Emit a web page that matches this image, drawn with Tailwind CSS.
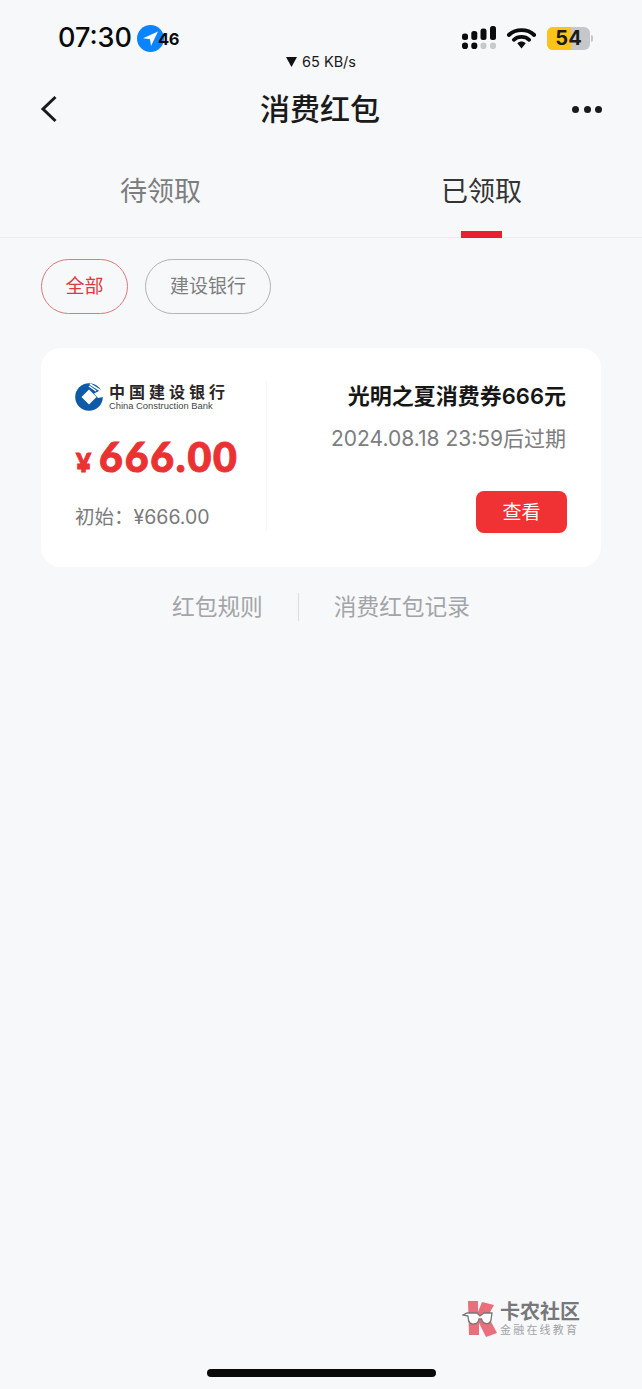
<!DOCTYPE html>
<html lang="zh-CN">
<head>
<meta charset="utf-8">
<script src="https://cdn.jsdelivr.net/npm/@tailwindcss/browser@4"></script>
</head>
<body class="m-0 bg-[#f7f8fa]">
<div class="relative w-[642px] h-[1389px] overflow-hidden bg-[#f7f8fa] font-['Inter','Noto_Sans_CJK_SC',sans-serif]">

  <!-- status bar -->
  <div class="h-[50px] pt-[20px] pl-[58px] pr-[49px] flex items-start justify-between">
    <div class="flex items-center h-[36px]">
      <span class="text-[27px] leading-[36px] font-medium text-[#0b0b0b]">07:30</span>
      <div class="relative ml-[5px] w-[27px] h-[27px] rounded-full bg-[#0a84ff] flex items-center justify-center">
        <svg width="17" height="17" viewBox="0 0 17 17"><path d="M16 1.500 L1 8.200 L8 9.200 L9 16 Z" fill="#fff"/></svg>
        <span class="absolute left-[21px] top-[2px] text-[16.500px] leading-[24px] font-bold text-[#0b0b0b] tracking-[-0.5px]">46</span>
      </div>
    </div>
    <div class="flex items-center h-[36px] gap-[11px]">
      <svg width="34" height="24" viewBox="0 0 34 24">
        <rect x="0" y="7.500" width="6" height="6.500" rx="2.500" fill="#0b0b0b"/>
        <rect x="9.300" y="5" width="6" height="9" rx="2.500" fill="#0b0b0b"/>
        <rect x="18.500" y="2.500" width="6" height="11.500" rx="2.500" fill="#0b0b0b"/>
        <rect x="28" y="0" width="6" height="14" rx="2.500" fill="#0b0b0b"/>
        <rect x="0" y="16.500" width="6" height="6.500" rx="2.800" fill="#0b0b0b"/>
        <rect x="9.300" y="16.500" width="6" height="6.500" rx="2.800" fill="#0b0b0b"/>
        <rect x="18.500" y="16.500" width="6" height="6.500" rx="2.800" fill="#c8c9cc"/>
        <rect x="28" y="16.500" width="6" height="6.500" rx="2.800" fill="#c8c9cc"/>
      </svg>
      <svg width="29" height="22" viewBox="0 0 29 22">
        <path d="M1.800 8 C8.500 1.500 20.500 1.500 27.200 8" fill="none" stroke="#0b0b0b" stroke-width="3.900" stroke-linecap="round"/>
        <path d="M6.800 12.800 C10.800 9 18.200 9 22.200 12.800" fill="none" stroke="#0b0b0b" stroke-width="3.700" stroke-linecap="round"/>
        <path d="M10.300 16.200 C12.800 13.800 16.200 13.800 18.700 16.200 L14.500 21.500 Z" fill="#0b0b0b"/>
      </svg>
      <div class="flex items-center">
        <div class="relative w-[43px] h-[23px] rounded-[6px] overflow-hidden bg-[#c6c7ca] flex items-center justify-center">
          <div class="absolute left-0 top-0 bottom-0 w-[24px] bg-[#fcc419]"></div>
          <span class="relative text-[20px] leading-[23px] font-bold text-[#1a1a1a]">54</span>
        </div>
        <div class="ml-[1px] w-[2px] h-[7px] rounded-r-full bg-[#c6c7ca]"></div>
      </div>
    </div>
  </div>

  <!-- network speed -->
  <div class="h-[24px] flex items-center justify-center gap-[5px] text-[14.500px] leading-[24px] text-[#1a1a1a]">
    <svg width="11" height="10" viewBox="0 0 11 10"><path d="M0 0 H11 L5.500 10 Z" fill="#111"/></svg>
    <span>65 KB/s</span>
  </div>

  <!-- nav -->
  <div class="h-[70px] px-[40px] flex items-center justify-between">
    <svg width="18" height="28" viewBox="0 0 18 28"><path d="M15.500 2 L3 14 L15.500 26" fill="none" stroke="#1a1a1a" stroke-width="3"/></svg>
    <h1 class="text-[30px] leading-[40px] font-medium text-[#1a1a1a] ml-[10px]">消费红包</h1>
    <div class="flex items-center gap-[4.500px]">
      <span class="w-[7px] h-[7px] rounded-full bg-[#1a1a1a]"></span>
      <span class="w-[7px] h-[7px] rounded-full bg-[#1a1a1a]"></span>
      <span class="w-[7px] h-[7px] rounded-full bg-[#1a1a1a]"></span>
    </div>
  </div>

  <!-- tabs -->
  <div class="h-[94px] grid grid-cols-2 border-b border-[#ececee]">
    <div class="flex justify-center pt-[28px] text-[27px] leading-[40px] text-[#7d7d7f]">待领取</div>
    <div class="relative flex justify-center pt-[28px] text-[27px] leading-[40px] text-[#333333]">
      已领取
      <span class="absolute bottom-[-1px] left-[140px] w-[41px] h-[7px] bg-[#e8202e]"></span>
    </div>
  </div>

  <!-- filters -->
  <div class="flex gap-[17px] pl-[41px] pt-[21px]">
    <div class="w-[87px] h-[55px] pt-[2px] rounded-full border border-[#e0777a] flex items-center justify-center text-[19px] text-[#e0383c]">全部</div>
    <div class="w-[126px] h-[55px] pt-[2px] rounded-full border border-[#b3b3b5] flex items-center justify-center text-[19px] text-[#7f7f81]">建设银行</div>
  </div>

  <!-- card -->
  <div class="mx-[41px] mt-[34px] h-[219px] rounded-[20px] bg-white flex pt-[33px]">
    <div class="w-[226px] h-[150px] pl-[34px] border-r border-[#f5f5f6] shrink-0">
      <div class="flex items-center h-[32px]">
        <svg width="28" height="28" viewBox="0 0 28 28" class="shrink-0">
          <circle cx="14" cy="14" r="13.800" fill="#0d5aa7"/>
          <path d="M14 6.500 L21.500 14 L14 21.500 L6.500 14 Z" fill="#fff"/>
          <path d="M15 1 L27.500 9" fill="none" stroke="#fff" stroke-width="1.800"/>
          <path d="M19 10.500 L28 6 L28 14 L23 15 Z" fill="#fff"/>
          <path d="M14 3 L21 8" fill="none" stroke="#fff" stroke-width="1.500"/>
        </svg>
        <div class="ml-[6px] flex flex-col">
          <span class="text-[16px] leading-[17px] font-semibold tracking-[4px] text-[#2a2526] whitespace-nowrap">中国建设银行</span>
          <span class="text-[9.400px] leading-[10px] text-[#444] font-['Liberation_Sans',sans-serif] whitespace-nowrap">China Construction Bank</span>
        </div>
      </div>
      <div class="mt-[20px] flex items-baseline text-[#ea3233] font-['Lato',sans-serif] font-black [-webkit-text-stroke:1px_#ea3233]">
        <span class="ml-[1px] text-[26px] leading-[48px] mr-[8px]">¥</span>
        <span class="text-[41px] leading-[48px] tracking-[1.800px]">666.00</span>
      </div>
      <div class="mt-[16px] text-[19.500px] leading-[30px] text-[#7a7a7c] whitespace-nowrap">初始：¥666.00</div>
    </div>
    <div class="flex-1 pr-[35px] flex flex-col items-end">
      <div class="text-[22px] leading-[30px] font-semibold text-[#161616] whitespace-nowrap">光明之夏消费券666元</div>
      <div class="mt-[13px] text-[21px] leading-[30px] text-[#7d7d7f] whitespace-nowrap">2024.08.18 23:59后过期</div>
      <div class="mt-[37px] w-[91px] h-[42px] pt-[2px] -mr-px rounded-[8px] bg-[#f03235] flex items-center justify-center text-[19px] text-white">查看</div>
    </div>
  </div>

  <!-- links -->
  <div class="mt-[26px] h-[28px] flex items-center justify-center text-[22.700px] text-[#a3a5a8]">
    <span>红包规则</span>
    <span class="mx-[35px] w-px h-[28px] bg-[#dcdde0]"></span>
    <span>消费红包记录</span>
  </div>

  <!-- watermark -->
  <div class="absolute left-[462px] top-[1300px] flex items-center">
    <svg width="36" height="38" viewBox="0 0 36 38">
      <path d="M6 1 H16 V12 L20 2 L32 5 L26 16 L35 33 L24 37 L17 23 V35 H7 Z" fill="#ea6f7d"/>
      <path d="M1 15 L5 13 H15 L18 16 L22 13 H30 L29 20 C28 25 21 25 19.500 19 H17 C16 25 8 26 6.500 20 L6 16 Z" fill="#fff" stroke="#777" stroke-width="1.300"/>
    </svg>
    <div class="ml-[2px] flex flex-col items-start">
      <span class="text-[20px] leading-[21px] font-bold text-[#77787b] whitespace-nowrap">卡农社区</span>
      <span class="text-[11px] leading-[14px] tracking-[2.200px] text-[#a2a3a6] whitespace-nowrap">金融在线教育</span>
    </div>
  </div>

  <!-- home indicator -->
  <div class="absolute left-[207px] top-[1369px] w-[229px] h-[8px] rounded-full bg-[#0a0a0a]"></div>
</div>
</body>
</html>
